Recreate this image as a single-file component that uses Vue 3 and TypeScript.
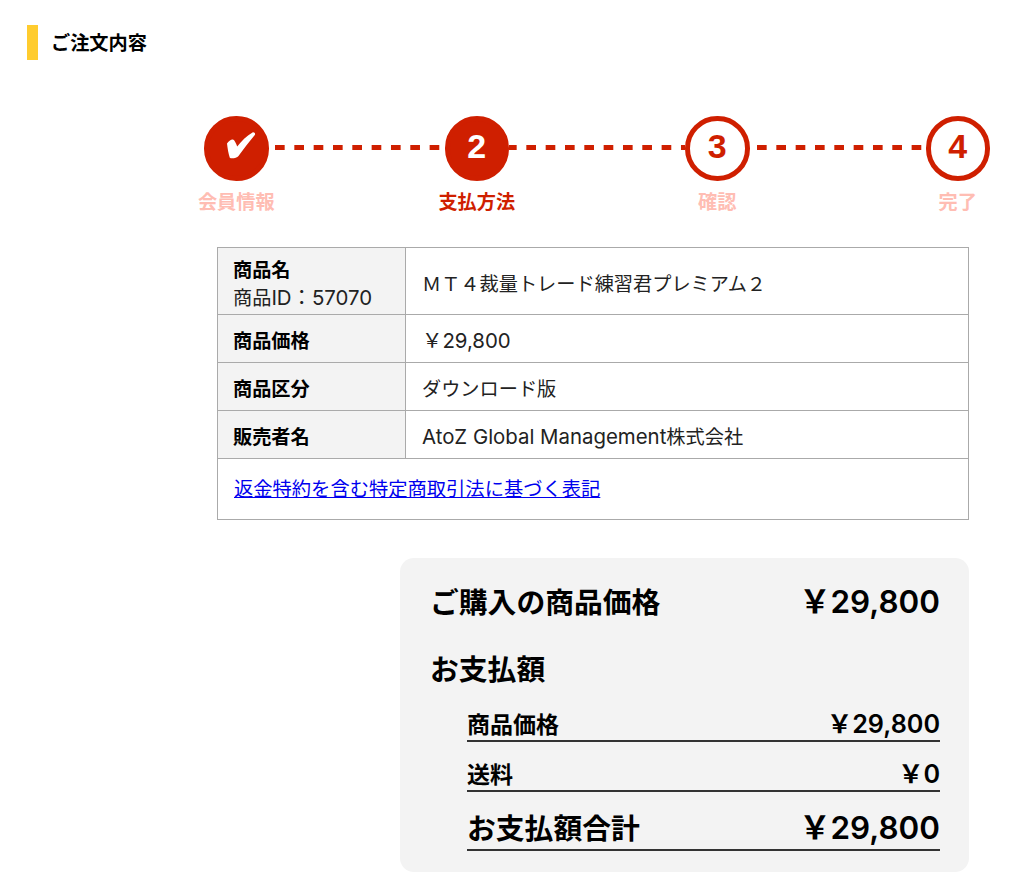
<template>
  <div class="page">
    <h2 class="title">ご注文内容</h2>

    <ol class="steps">
      <template v-for="(step, i) in steps" :key="step.label">
        <li v-if="i > 0" class="dash" :style="{ backgroundPositionX: `${step.dashOffset}px` }" aria-hidden="true"></li>
        <li class="step" :class="{ filled: step.filled, current: step.current }">
          <span class="circle">
            <svg v-if="step.check" class="check" viewBox="0 0 30 27" width="30" height="27">
              <path d="M1 11.500C2.500 9 5.500 7 7 7.500C8.500 8 10 11 11.200 14.500C15.500 9 21 3.500 26.500 0.500C28 -0.200 29.800 1.500 28.800 3C23.500 9.500 17.500 17 12.500 24C11 26 5.500 27 3.800 25.800C2.500 22 1.500 16 1 11.500Z" fill="#fff" />
            </svg>
            <template v-else>{{ step.no }}</template>
          </span>
          <span class="step-label">{{ step.label }}</span>
        </li>
      </template>
    </ol>

    <table class="info">
      <tbody>
        <tr class="tall">
          <th>商品名<br /><span class="sub">商品<span class="latin">ID：57070</span></span></th>
          <td>ＭＴ４裁量トレード練習君プレミアム２</td>
        </tr>
        <tr v-for="row in rows" :key="row.name">
          <th>{{ row.name }}</th>
          <td><span class="latin">{{ row.latin }}</span>{{ row.value }}</td>
        </tr>
        <tr class="link-row">
          <td colspan="2"><a href="#">返金特約を含む特定商取引法に基づく表記</a></td>
        </tr>
      </tbody>
    </table>

    <section class="summary">
      <div class="sum-head">
        <span>ご購入の商品価格</span>
        <span class="price">￥29,800</span>
      </div>
      <h3 class="sum-title">お支払額</h3>
      <div class="sum-lines">
        <div class="sum-line">
          <span>商品価格</span>
          <span class="price">￥29,800</span>
        </div>
        <div class="sum-line">
          <span>送料</span>
          <span class="price">￥0</span>
        </div>
        <div class="sum-line total">
          <span>お支払額合計</span>
          <span class="price">￥29,800</span>
        </div>
      </div>
    </section>
  </div>
</template>

<script setup lang="ts">
interface Step {
  no: number
  label: string
  filled?: boolean
  current?: boolean
  check?: boolean
  dashOffset?: number
}

const steps: Step[] = [
  { no: 1, label: '会員情報', filled: true, check: true },
  { no: 2, label: '支払方法', filled: true, current: true, dashOffset: 6 },
  { no: 3, label: '確認', dashOffset: -2 },
  { no: 4, label: '完了', dashOffset: 7 }
]

const rows = [
  { name: '商品価格', latin: '￥29,800', value: '' },
  { name: '商品区分', latin: '', value: 'ダウンロード版' },
  { name: '販売者名', latin: 'AtoZ Global Management', value: '株式会社' }
]
</script>

<style scoped>
.page {
  box-sizing: border-box;
  width: 1024px;
  height: 882px;
  padding: 25px 34px 0 27px;
  overflow: hidden;
  color: #000;
  font-family: Inter, "Noto Sans CJK JP", sans-serif;
}

.title {
  height: 35px;
  margin: 0;
  padding-left: 13px;
  border-left: 11px solid #ffcc2e;
  font-size: 19.2px;
  font-weight: 700;
  line-height: 36px;
}

.steps {
  display: flex;
  align-items: flex-start;
  margin: 56px 0 0 177px;
  padding: 0;
  list-style: none;
}

.step {
  display: flex;
  flex: 0 0 64.5px;
  flex-direction: column;
  align-items: center;
  width: 64.5px;
}

.circle {
  box-sizing: border-box;
  display: flex;
  align-items: center;
  justify-content: center;
  width: 64.5px;
  height: 64.5px;
  padding-bottom: 4px;
  border: 5px solid #cf1f00;
  border-radius: 50%;
  background: #fff;
  color: #cf1f00;
  font-family: "Liberation Sans", sans-serif;
  font-size: 34px;
  font-weight: 700;
}

.filled .circle {
  background: #cf1f00;
  color: #fff;
}

.check {
  margin: 0 0 1px 9px;
}

.step-label {
  margin-top: 7px;
  color: #ffbdb3;
  font-size: 19.2px;
  font-weight: 700;
  line-height: 29px;
  white-space: nowrap;
}

.current .step-label {
  color: #cf1f00;
}

.dash {
  flex: 1;
  height: 5px;
  margin-top: 29px;
  background-image: linear-gradient(to right, #cf1f00 0 9.5px, transparent 9.5px);
  background-repeat: repeat-x;
  background-size: 19.33px 5px;
}

.info {
  width: 752px;
  margin: 30px 0 0 190px;
  border-collapse: collapse;
  font-size: 19.2px;
  line-height: 28px;
}

.info th,
.info td {
  box-sizing: border-box;
  height: 48px;
  padding: 6px 16px 0;
  border: 1px solid #aaa;
  color: #222;
  text-align: left;
  vertical-align: middle;
}

.info th {
  width: 188px;
  padding-left: 15px;
  background: #f3f3f3;
  color: #000;
  font-weight: 700;
}

.latin {
  font-size: 20.4px;
}

.sub {
  color: #222;
  font-weight: 400;
}

.info .tall th,
.info .tall td {
  height: 67px;
  padding-top: 7px;
}

.info .link-row td {
  height: 61px;
  padding-top: 0;
}

.info a {
  color: #00e;
  font-size: 19.3px;
}

.summary {
  box-sizing: border-box;
  width: 569px;
  height: 314px;
  margin: 38px 0 0 373px;
  padding: 24px 29px 0 30px;
  border-radius: 14px;
  background: #f3f3f3;
}

.sum-head {
  display: flex;
  align-items: baseline;
  justify-content: space-between;
  height: 40px;
  font-size: 28.8px;
  font-weight: 700;
  line-height: 40px;
}

.price {
  font-size: 31.4px;
  font-weight: 600;
}

.sum-title {
  margin: 28px 0 0;
  font-size: 28.8px;
  font-weight: 700;
  line-height: 40px;
}

.sum-lines {
  margin: 15px 0 0 37px;
}

.sum-line {
  display: flex;
  align-items: baseline;
  justify-content: space-between;
  height: 50px;
  box-sizing: border-box;
  padding-top: 16px;
  border-bottom: 2px solid #333;
  font-size: 23px;
  font-weight: 700;
  line-height: 32px;
}

.sum-line .price {
  font-size: 25.2px;
}

.sum-line:first-child {
  height: 37px;
  padding-top: 3px;
}

.sum-line.total {
  height: 59px;
  padding-top: 16px;
  font-size: 28.8px;
  line-height: 40px;
}

.sum-line.total .price {
  font-size: 31.4px;
}
</style>

<style>
body {
  margin: 0;
  background: #fff;
}
</style>
